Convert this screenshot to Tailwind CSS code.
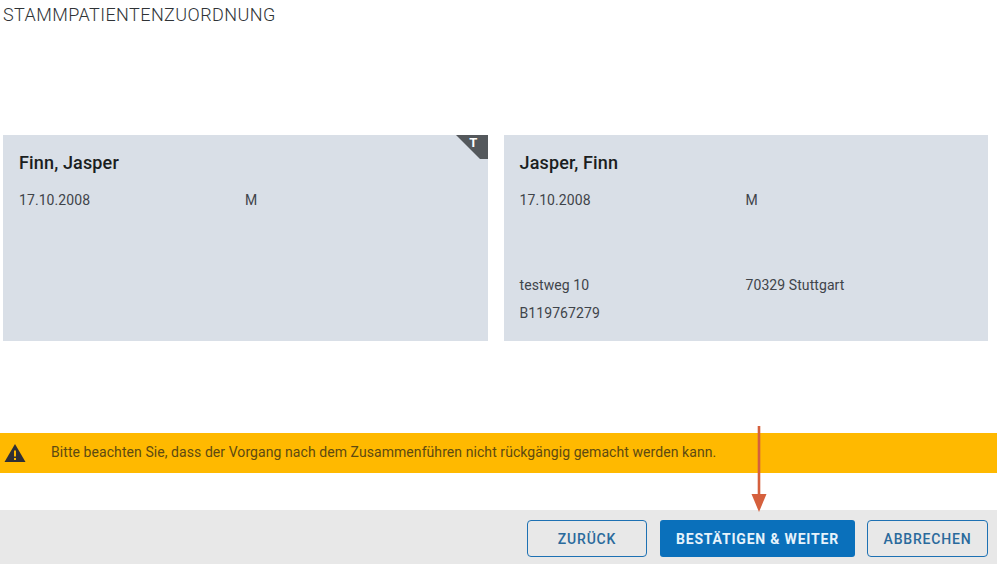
<!DOCTYPE html>
<html lang="de">
<head>
  <meta charset="UTF-8">
  <meta name="viewport" content="width=device-width, initial-scale=1.0">
  <script src="https://cdn.jsdelivr.net/npm/@tailwindcss/browser@4"></script>
  <title>Stammpatientenzuordnung</title>
</head>
<body class="bg-white font-['Roboto',sans-serif]">
  <main class="relative flex flex-col w-[997px] h-[564px] overflow-hidden">
    <h1 class="pl-[3px] pt-[4px] h-[135px] text-[18px] leading-[21px] font-light text-[#2f3336] tracking-[0.42px]">STAMMPATIENTENZUORDNUNG</h1>

    <section class="flex gap-[16px] pl-[3px] pr-[9px] h-[206px]">
      <div class="relative flex-1 bg-[#d9dfe7] pl-[16px] pt-[18px] text-[14px] text-[#3f444a] tracking-[0.08px]">
        <h2 class="text-[18px] leading-[20px] font-medium text-[#1b1e21] tracking-[0.15px]">Finn, Jasper</h2>
        <div class="grid grid-cols-[226px_1fr] mt-[17px] leading-[20px]">
          <span>17.10.2008</span><span>M</span>
        </div>
        <svg class="absolute top-0 right-0" width="32" height="24" viewBox="0 0 32 24">
          <polygon points="0,0 32,0 32,24 24,24" fill="#54585c"/>
        </svg>
        <span class="absolute top-0 right-[10px] text-[13px] leading-[16px] font-bold text-white">T</span>
      </div>
      <div class="flex-1 bg-[#d9dfe7] pl-[16px] pt-[18px] text-[14px] text-[#3f444a] tracking-[0.08px]">
        <h2 class="text-[18px] leading-[20px] font-medium text-[#1b1e21] tracking-[0.15px]">Jasper, Finn</h2>
        <div class="grid grid-cols-[226px_1fr] mt-[17px] leading-[20px]">
          <span>17.10.2008</span><span>M</span>
        </div>
        <div class="grid grid-cols-[226px_1fr] mt-[65px] gap-y-[8px] leading-[20px]">
          <span>testweg 10</span><span>70329 Stuttgart</span>
          <span>B119767279</span>
        </div>
      </div>
    </section>

    <div class="flex items-center mt-[92px] h-[40px] bg-[#ffb900] text-[14px] text-[#5d4a12] tracking-[0.07px]">
      <svg class="ml-[4px] mr-[25px]" width="22" height="20" viewBox="0 0 22 20">
        <polygon points="11,1 21.5,19 0.5,19" fill="#2f2f35"/>
        <rect x="10" y="7.5" width="2" height="6" fill="#ffb900"/>
        <rect x="10" y="15" width="2" height="2" fill="#ffb900"/>
      </svg>
      <p class="mt-[-1px]">Bitte beachten Sie, dass der Vorgang nach dem Zusammenführen nicht rückgängig gemacht werden kann.</p>
    </div>

    <footer class="flex justify-end items-center gap-[12px] mt-[37px] pr-[9px] h-[54px] bg-[#e8e8e8] text-[14px] leading-[20px] font-medium tracking-[0.8px]">
      <button class="w-[120px] h-[37px] mt-[3px] mr-[1px] rounded-[4px] border border-[#1d71b3] text-[#2a6a9c]">ZURÜCK</button>
      <button class="w-[195px] h-[37px] mt-[3px] rounded-[3px] bg-[#0a70bb] text-[#e6f3fb] font-bold">BESTÄTIGEN &amp; WEITER</button>
      <button class="w-[121px] h-[37px] mt-[3px] rounded-[4px] border border-[#1d71b3] text-[#2a6a9c]">ABBRECHEN</button>
    </footer>

    <!-- annotation arrow over the banner and footer -->
    <svg class="absolute left-[749px] top-[425px]" width="20" height="88" viewBox="0 0 20 88">
      <rect x="8.7" y="1" width="2.6" height="73" fill="#d5603d"/>
      <polygon points="2.5,69 17.5,69 10,87" fill="#d5603d"/>
    </svg>
  </main>
</body>
</html>
